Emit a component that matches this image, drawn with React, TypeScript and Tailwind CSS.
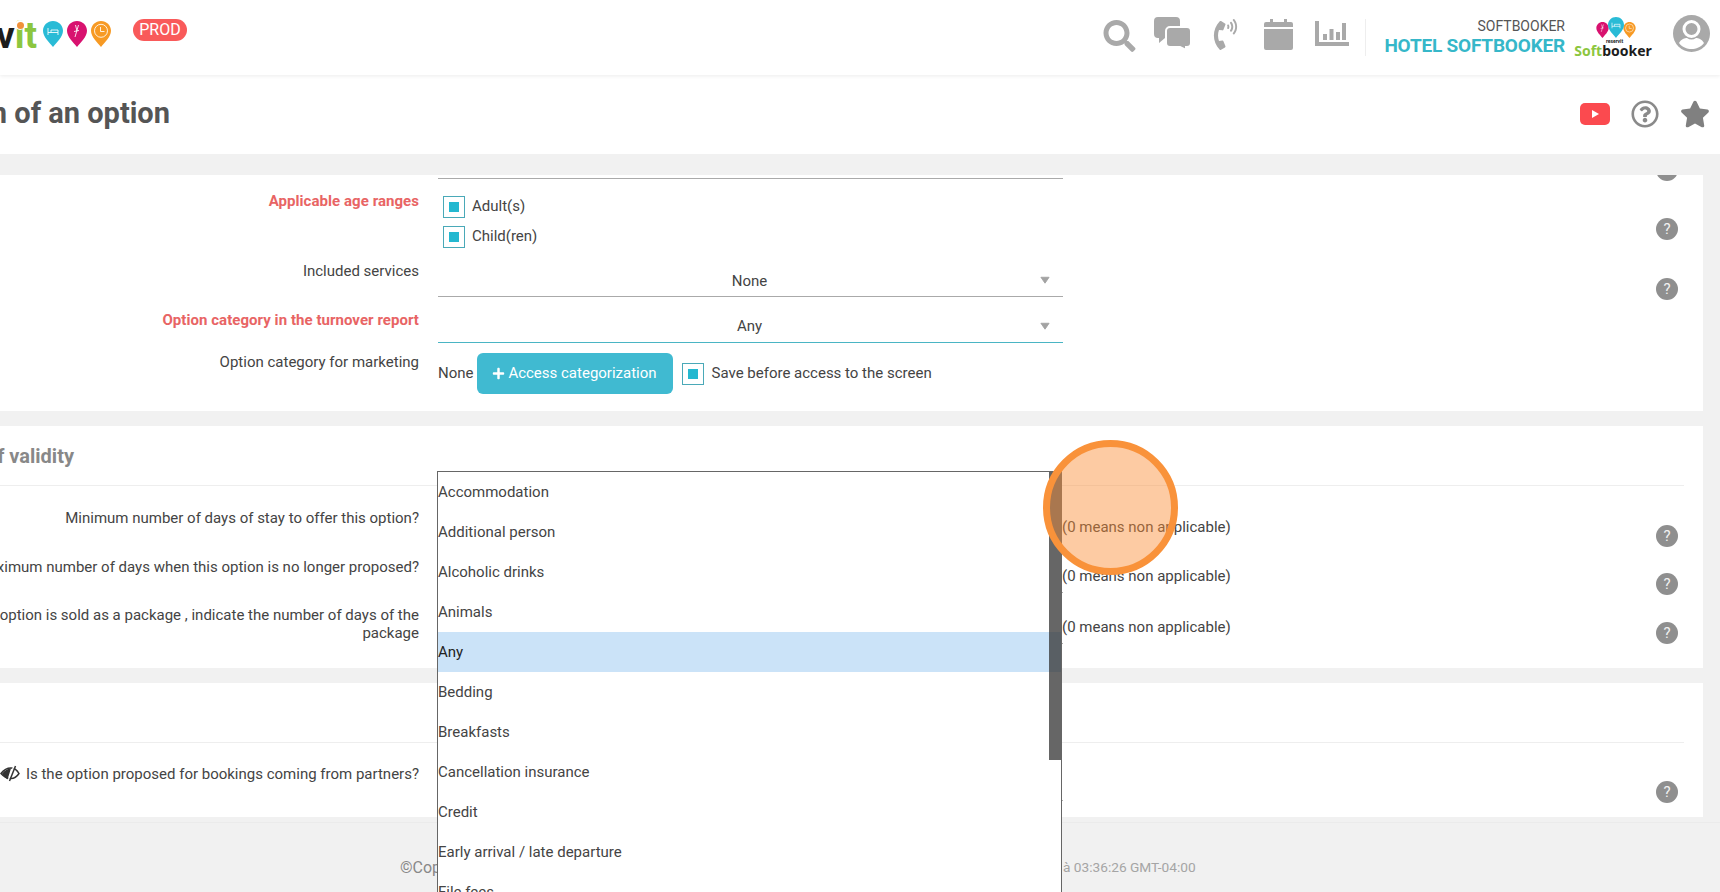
import type { ReactNode } from "react";
import { FaSearch, FaPhoneVolume, FaStar, FaRegQuestionCircle, FaPlus } from "react-icons/fa";

const options = [
  "Accommodation",
  "Additional person",
  "Alcoholic drinks",
  "Animals",
  "Any",
  "Bedding",
  "Breakfasts",
  "Cancellation insurance",
  "Credit",
  "Early arrival / late departure",
  "File fees",
];

const PIN_PATH = "M10 0C4.500 0 0 4.400 0 9.800 0 16 6.500 21.500 10 26c3.500-4.500 10-10 10-16.200C20 4.400 15.500 0 10 0z";

function Pin({ color, className = "w-[20px] h-[26px]" }: { color: string; className?: string }) {
  return (
    <svg viewBox="0 0 20 26" className={className}>
      <path d={PIN_PATH} fill={color} />
      <path d="M5 7v7M5 11.500h10V14M15 11.500V9H8V11.500" stroke="#fff" strokeWidth="1" fill="none" opacity="0.85" />
    </svg>
  );
}

function PinScissors({ className = "w-[20px] h-[26px]" }: { className?: string }) {
  return (
    <svg viewBox="0 0 20 26" className={className}>
      <path d={PIN_PATH} fill="#d8126f" />
      <path d="M11.500 4L8 16M8.500 4l1.500 6M7 10.500l5-1" stroke="#fff" strokeWidth="1" fill="none" opacity="0.85" />
    </svg>
  );
}

function PinClock({ className = "w-[20px] h-[26px]" }: { className?: string }) {
  return (
    <svg viewBox="0 0 20 26" className={className}>
      <path d={PIN_PATH} fill="#f79a24" />
      <circle cx="10" cy="9.800" r="6.500" stroke="#fff" strokeWidth="1" fill="none" opacity="0.85" />
      <path d="M9.500 6v4.500h4" stroke="#fff" strokeWidth="1" fill="none" opacity="0.85" />
    </svg>
  );
}

function Help({ className = "" }: { className?: string }) {
  return (
    <div className={`ml-auto mr-[25px] shrink-0 w-[22px] h-[22px] rounded-full bg-[#8f8f8f] text-[#f2f2f2] text-[15px] leading-[22px] text-center ${className}`}>?</div>
  );
}

function Label({ children, red, className = "" }: { children: ReactNode; red?: boolean; className?: string }) {
  return (
    <div className={`w-[490px] -ml-[71px] shrink-0 text-right leading-[18px] ${red ? "text-[#e86464] font-bold tracking-[0.05px]" : ""} ${className}`}>
      {children}
    </div>
  );
}

function Check() {
  return (
    <div className="w-[22px] h-[22px] shrink-0 border border-[#4aa9b8] flex items-center justify-center">
      <div className="w-[10px] h-[10px] bg-[#24b8d0]" />
    </div>
  );
}

function Select({ value, className, caretTop }: { value: string; className: string; caretTop: string }) {
  return (
    <div className={`ml-[19px] w-[625px] shrink-0 relative text-center leading-[18px] border-b pr-[2px] ${className}`}>
      {value}
      <svg viewBox="0 0 11 8" className={`w-[10px] h-[8px] absolute right-[13px] ${caretTop}`}>
        <path d="M1 1h9L5.500 7.500z" fill="#a3a3a3" stroke="#a3a3a3" strokeLinejoin="round" />
      </svg>
    </div>
  );
}

function NumberRow({ height, label, labelTop, fieldHeight, noteTop, helpTop }: { height: string; label: ReactNode; labelTop: string; fieldHeight: string; noteTop: string; helpTop: string }) {
  return (
    <div className={`flex ${height}`}>
      <Label className={labelTop}>{label}</Label>
      <div className={`ml-[19px] w-[625px] shrink-0 border-b border-[#aaaaaa] ${fieldHeight}`} />
      <div className={`-ml-[1px] leading-[18px] whitespace-nowrap ${noteTop}`}>(0 means non applicable)</div>
      <Help className={helpTop} />
    </div>
  );
}

export default function App() {
  return (
    <div className="relative h-[892px] w-[1720px] overflow-hidden flex flex-col bg-[#f1f1f1] text-[#444444] text-[15px] [font-family:Roboto,sans-serif]">
      {/* top bar */}
      <header className="relative z-10 h-[75px] shrink-0 bg-white shadow-[0_1px_4px_rgba(0,0,0,0.08)] flex items-start pr-[10px]">
        <div className="w-[37px] h-[50px] mt-[13px] flex justify-end relative whitespace-nowrap text-[37px] leading-[46px] font-bold">
          <span className="text-[#1c1c1c]">v</span>
          <span className="text-[#8cc63f]">it</span>
          <div className="absolute left-[15px] top-[7px] w-[10px] h-[10px] rounded-full bg-white flex items-center justify-center">
            <div className="w-[7px] h-[7px] rounded-full bg-[#f0913a]" />
          </div>
        </div>
        <div className="ml-[6px] mt-[21px] flex gap-[4px]">
          <Pin color="#29bbd6" />
          <PinScissors />
          <PinClock />
        </div>
        <div className="ml-[22px] mt-[19px] w-[54px] h-[22px] rounded-full bg-[#f95a5a] text-white text-[16px] leading-[22px] text-center">PROD</div>

        <FaSearch className="ml-auto mt-[20px] w-[33px] h-[32px] text-[#a9a9a9] shrink-0" />
        <svg viewBox="0 0 37 33" className="ml-[18px] mt-[17px] w-[37px] h-[33px] shrink-0">
          <path d="M4 0h18a4 4 0 0 1 4 4v13a4 4 0 0 1-4 4H11l-6 5v-5H4a4 4 0 0 1-4-4V4a4 4 0 0 1 4-4z" fill="#a9a9a9" />
          <path d="M16 10h17a4 4 0 0 1 4 4v12a4 4 0 0 1-4 4h-1v3l-6-3H16a4 4 0 0 1-4-4V14a4 4 0 0 1 4-4z" fill="#a9a9a9" stroke="#fff" strokeWidth="2" />
        </svg>
        <FaPhoneVolume className="ml-[22px] mt-[19px] w-[25px] h-[31px] text-[#a9a9a9] shrink-0" />
        <svg viewBox="0 0 29 31" className="ml-[26px] mt-[19px] w-[29px] h-[31px] shrink-0">
          <path d="M2 3h4V0h3v3h11V0h3v3h4a2 2 0 0 1 2 2v3H0V5a2 2 0 0 1 2-2zM0 10h29v19a2 2 0 0 1-2 2H2a2 2 0 0 1-2-2z" fill="#a9a9a9" />
        </svg>
        <svg viewBox="0 0 34 25" className="ml-[22px] mt-[21px] w-[34px] h-[25px] shrink-0">
          <path d="M0 0h4v21h30v4H0zM8 13h4v6H8zM14.500 8h4v11h-4zM21 11h4v8h-4zM27 2h4v17h-4z" fill="#a9a9a9" />
        </svg>
        <div className="ml-[16px] mt-[19px] w-px h-[37px] bg-[#eeeeee] shrink-0" />
        <div className="ml-[18px] w-[181px] mt-[18px] shrink-0 flex flex-col items-end whitespace-nowrap">
          <div className="text-[14px] leading-[16px] text-[#555555]">SOFTBOOKER</div>
          <div className="text-[19px] leading-[24px] font-bold tracking-[-0.2px] text-[#36b7c9]">HOTEL SOFTBOOKER</div>
        </div>
        <div className="ml-[11px] w-[74px] mt-[17px] shrink-0 flex flex-col items-center">
          <div className="flex items-start pl-[5px] h-[21px]">
            <PinScissors className="w-[13px] h-[16px] mt-[5px] -mr-[1px]" />
            <Pin color="#29bbd6" className="w-[16px] h-[21px] relative" />
            <PinClock className="w-[13px] h-[16px] mt-[5px] -ml-[1px]" />
          </div>
          <div className="text-[5px] leading-[6px] font-bold text-[#222222] pl-[3px]">reservit</div>
          <div className="-mt-[1px] text-[14px] leading-[16px] font-bold [font-family:'Noto_Sans',sans-serif] whitespace-nowrap">
            <span className="text-[#8cc63f]">Soft</span>
            <span className="text-[#1c1c1c]">booker</span>
          </div>
        </div>
        <svg viewBox="0 0 37 37" className="ml-[23px] mt-[15px] w-[37px] h-[37px] shrink-0">
          <circle cx="18.500" cy="18.500" r="18.500" fill="#a9a9a9" />
          <circle cx="18.500" cy="14" r="7.500" fill="none" stroke="#fff" strokeWidth="3" />
          <path d="M6 28c2-4 6-5 8-5 3 2 6 2 9 0 2 0 6 1 8 5-3 4-8 6-12.500 6S9 32 6 28z" fill="#fff" />
        </svg>
      </header>

      {/* title bar */}
      <div className="h-[79px] shrink-0 bg-white flex items-center pr-[10px]">
        <div className="w-[170px] flex justify-end whitespace-nowrap text-[29px] font-bold text-[#555555] -mt-[2px]">n of an option</div>
        <svg viewBox="0 0 30 22" className="ml-auto w-[30px] h-[22px] -mt-[1px]">
          <rect width="30" height="22" rx="5" fill="#fb4a4f" />
          <path d="M12 7l7 4-7 4z" fill="#fff" />
        </svg>
        <FaRegQuestionCircle className="ml-[21px] w-[28px] h-[28px] text-[#8a8a8a] -mt-[1px]" />
        <FaStar className="ml-[21px] w-[30px] h-[30px] text-[#808080] -mt-[1px]" />
      </div>

      {/* cards */}
      <main className="mt-[21px] flex-1 min-h-0 overflow-hidden pr-[17px]">
        <section className="h-[236px] bg-white">
          <div className="flex h-[4px]">
            <Label>{""}</Label>
            <div className="ml-[19px] w-[625px] shrink-0 h-[4px] border-b border-[#aaaaaa]" />
            <Help className="-mt-[16px]" />
          </div>
          <div className="flex h-[79px]">
            <Label red className="mt-[13px]">Applicable age ranges</Label>
            <div className="ml-[24px] pt-[17px] flex flex-col gap-[8px]">
              <div className="flex items-center gap-[7px]"><Check /><span className="-mt-[2px]">Adult(s)</span></div>
              <div className="flex items-center gap-[7px]"><Check /><span className="-mt-[2px]">Child(ren)</span></div>
            </div>
            <Help className="mt-[39px]" />
          </div>
          <div className="flex h-[39px]">
            <Label className="mt-[4px]">Included services</Label>
            <Select value="None" className="h-[39px] pt-[14px] border-[#aaaaaa]" caretTop="top-[18px]" />
            <Help className="mt-[20px]" />
          </div>
          <div className="flex h-[46px]">
            <Label red className="mt-[14px]">Option category in the turnover report</Label>
            <Select value="Any" className="h-[46px] pt-[20px] border-[#4ab5c4]" caretTop="top-[25px]" />
          </div>
          <div className="flex h-[68px]">
            <Label className="mt-[10px]">Option category for marketing</Label>
            <div className="ml-[19px] mt-[10px] h-[41px] flex items-center whitespace-nowrap">
              None
              <div className="ml-[3px] w-[196px] h-[41px] rounded-[6px] bg-[#40bad1] text-white flex items-center justify-center">
                <FaPlus className="w-[13px] h-[13px] mr-[3px]" />Access categorization
              </div>
              <div className="ml-[9px] mr-[8px]"><Check /></div>
              Save before access to the screen
            </div>
          </div>
        </section>

        <section className="mt-[15px] h-[242px] bg-white">
          <div className="h-[60px] mr-[19px] border-b border-[#eeeeee] flex items-center">
            <div className="w-[74px] flex justify-end whitespace-nowrap text-[20px] font-bold text-[#888888]">f validity</div>
          </div>
          <NumberRow height="h-[60px]" label="Minimum number of days of stay to offer this option?" labelTop="mt-[23px]" fieldHeight="h-[60px]" noteTop="mt-[32px]" helpTop="mt-[39px]" />
          <NumberRow height="h-[47px]" label="Maximum number of days when this option is no longer proposed?" labelTop="mt-[12px]" fieldHeight="h-[47px]" noteTop="mt-[21px]" helpTop="mt-[27px]" />
          <NumberRow height="h-[75px]" label="If the option is sold as a package , indicate the number of days of the package" labelTop="mt-[13px]" fieldHeight="h-[51px]" noteTop="mt-[25px]" helpTop="mt-[29px]" />
        </section>

        <section className="mt-[15px] h-[134px] bg-white">
          <div className="h-[60px] mr-[19px] border-b border-[#eeeeee]" />
          <div className="flex">
            <Label className="mt-[22px]">
              <svg viewBox="0 0 20 17" className="inline-block w-[20px] h-[17px] mr-[6px] align-[-3px]">
                <path d="M1 8.500C4 4.500 8 3 11 3c3 0 6 2 8 5.500-2 3-5 5-8 5-4 0-7-1.500-10-5z" fill="none" stroke="#333333" strokeWidth="1.500" />
                <path d="M2 8.500C5 5 8 3.500 11 3.500L7.500 14.500C5.500 13 3.500 11 2 8.500z" fill="#333333" />
                <path d="M14 1L8 16" stroke="#ffffff" strokeWidth="1.500" />
                <path d="M15.500 1L9.500 16" stroke="#333333" strokeWidth="1.500" />
              </svg>
              Is the option proposed for bookings coming from partners?
            </Label>
            <div className="ml-[19px] w-[625px] shrink-0 h-[58px] border-b border-[#aaaaaa]" />
            <Help className="mt-[38px]" />
          </div>
        </section>
      </main>

      {/* footer */}
      <footer className="mt-[5px] h-[70px] shrink-0 border-t border-[#ebebeb] pl-[400px] flex items-center pt-[20px] whitespace-nowrap">
        <div className="w-[663px] text-[16px] text-[#888888] overflow-hidden">©Copyright</div>
        <div className="text-[13.7px] text-[#a5a5a5]">à 03:36:26 GMT-04:00</div>
      </footer>

      {/* open dropdown list */}
      <div className="absolute left-[437px] top-[471px] bottom-0 w-[625px] bg-white border-l border-t border-r border-[#666666] text-[15px] leading-[40px]">
        {options.map((o) => (
          <div key={o} className={`h-[40px] ${o === "Any" ? "bg-[#cbe3f8] text-[#222222]" : ""}`}>{o}</div>
        ))}
        <div className="absolute right-0 top-0 w-[12px] h-[288px] bg-[#333333]/75" />
      </div>

      {/* click marker */}
      <div className="absolute left-[1043px] top-[440px] w-[135px] h-[135px] rounded-full border-[7px] border-[#f9923a] bg-[#fb8c32]/45" />
    </div>
  );
}
